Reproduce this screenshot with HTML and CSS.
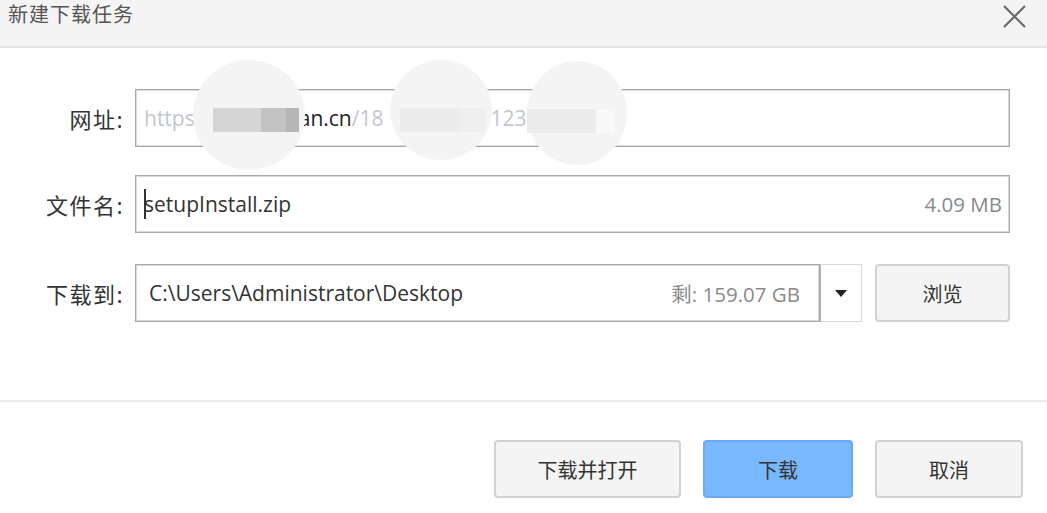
FILE: index.html
```html
<!DOCTYPE html>
<html lang="zh-CN">
<head>
<meta charset="utf-8">
<title>新建下载任务</title>
<link rel="stylesheet" href="styles.css">
</head>
<body>
<div class="dialog">
  <header class="titlebar">
    <span class="title">新建下载任务</span>
    <svg class="close" width="26" height="26" viewBox="0 0 26 26"><path d="M3 3 L24 24 M24 3 L3 24" stroke="#6a6a6a" stroke-width="2.2" fill="none"/></svg>
  </header>
  <main class="form">
    <div class="row row-url">
      <label class="label">网址:</label>
      <div class="field url-field">
        <span class="url-text"><span class="muted">https</span><span class="gap gap1"></span><span class="dark">an.cn</span><span class="muted">/18</span><span class="gap gap2"></span><span class="muted">123</span></span>
        <div class="blur b1"><span class="pix p1a"></span><span class="pix p1b"></span><span class="pix p1c"></span></div>
        <div class="blur b2"><span class="pix p2a"></span><span class="pix p2b"></span></div>
        <div class="blur b3"><span class="pix p3a"></span><span class="pix p3b"></span></div>
      </div>
    </div>
    <div class="row row-name">
      <label class="label">文件名:</label>
      <div class="field name-field">
        <span class="caret"></span><span class="value">setupInstall.zip</span>
        <span class="aside">4.09 MB</span>
      </div>
    </div>
    <div class="row row-dir">
      <label class="label">下载到:</label>
      <div class="field dir-field">
        <span class="value">C:\Users\Administrator\Desktop</span>
        <span class="aside">剩: 159.07 GB</span>
      </div>
      <div class="dropdown"><svg width="12" height="7" viewBox="0 0 12 7"><path d="M0 0 H12 L6 7 Z" fill="#222"/></svg></div>
      <button class="btn browse">浏览</button>
    </div>
  </main>
  <footer class="footer">
    <button class="btn">下载并打开</button>
    <button class="btn primary">下载</button>
    <button class="btn">取消</button>
  </footer>
</div>
</body>
</html>
```
FILE: styles.css
```css
html, body {
  margin: 0;
  padding: 0;
  background: #ffffff;
}
body {
  width: 1047px;
  height: 513px;
  overflow: hidden;
  font-family: "Open Sans", "Noto Sans CJK SC", sans-serif;
  color: #333;
}
.dialog {
  display: flex;
  flex-direction: column;
  height: 513px;
}
.titlebar {
  height: 46px;
  background: #f4f4f4;
  border-bottom: 2px solid #e6e6e6;
  display: flex;
  align-items: flex-start;
  justify-content: space-between;
  box-sizing: content-box;
  flex: none;
}
.title {
  font-family: "Noto Sans CJK SC", sans-serif;
  font-size: 20px;
  line-height: 28px;
  color: #555;
  margin-left: 8px;
  letter-spacing: 1px;
}
.close {
  margin: 3px 20px 0 0;
}
.form {
  padding-top: 41px;
  height: 354px;
  box-sizing: border-box;
  border-bottom: 2px solid #ececec;
  flex: none;
}
.row {
  display: flex;
  align-items: center;
  height: 58px;
}
.row-name { margin-top: 28px; }
.row-dir { margin-top: 31px; }
.label {
  width: 124px;
  text-align: right;
  padding-right: 11px;
  font-family: "Noto Sans CJK SC", sans-serif;
  font-size: 22px;
  letter-spacing: 1.5px;
  color: #333;
}
.field {
  position: relative;
  height: 58px;
  box-sizing: border-box;
  border: 1px solid #a8a8a8;
  box-shadow: inset 0 0 0 1px #d9d9d9;
  display: flex;
  align-items: center;
  padding: 0 7px 0 8px;
  font-size: 21px;
  background: #fff;
}
.url-field, .name-field { width: 875px; }
.dir-field { width: 685px; padding-left: 13px; padding-right: 19px; }
.value { color: #333; }
.aside {
  margin-left: auto;
  color: #8a8a8a;
  font-size: 20.5px;
}
.caret {
  width: 2px;
  height: 30px;
  background: #333;
  margin-right: -2px;
}
.url-text { white-space: nowrap; }
.muted { color: #c2c6cc; }
.dark { color: #222; }
.gap { display: inline-block; }
.gap1 { width: 104px; }
.gap2 { width: 107px; }
.blur {
  position: absolute;
  border-radius: 50%;
  background: #f4f4f4;
}
.b1 { left: 57px; top: -30px; width: 112px; height: 110px; }
.b2 { left: 254px; top: -30px; width: 102px; height: 100px; }
.b3 { left: 391px; top: -29px; width: 100px; height: 104px; }
.pix { position: absolute; top: 48px; height: 24px; }
.p1a { left: 20px; width: 48px; background: #d5d5d5; }
.p1b { left: 68px; width: 25px; background: #c3c3c3; }
.p1c { left: 93px; width: 13px; background: #b6b6b6; }
.p2a { left: 10px; width: 60px; background: #ececec; }
.p2b { left: 70px; width: 25px; background: #efefef; }
.p3a { left: 0; width: 69px; background: #ececec; }
.p3b { left: 69px; width: 19px; background: #f9f9f9; }
.dropdown {
  width: 43px;
  height: 58px;
  box-sizing: border-box;
  border: 1px solid #d9d9d9;
  border-left: 2px solid #b4b4b4;
  margin-left: -1px;
  display: flex;
  align-items: center;
  justify-content: center;
}
.btn {
  font-family: "Noto Sans CJK SC", sans-serif;
  font-size: 20px;
  color: #333;
  background: #f4f4f4;
  border: 2px solid #d2d2d2;
  border-radius: 4px;
  height: 58px;
  padding: 0;
  cursor: pointer;
}
.browse {
  width: 135px;
  margin-left: 13px;
}
.footer {
  display: flex;
  justify-content: flex-end;
  gap: 22px;
  padding: 38px 24px 0 0;
}
.footer .btn:nth-child(1) { width: 187px; }
.footer .btn:nth-child(2) { width: 150px; }
.footer .btn:nth-child(3) { width: 148px; }
.primary {
  background: #7ab8fd;
  border-color: #6aaaf5;
}
```
